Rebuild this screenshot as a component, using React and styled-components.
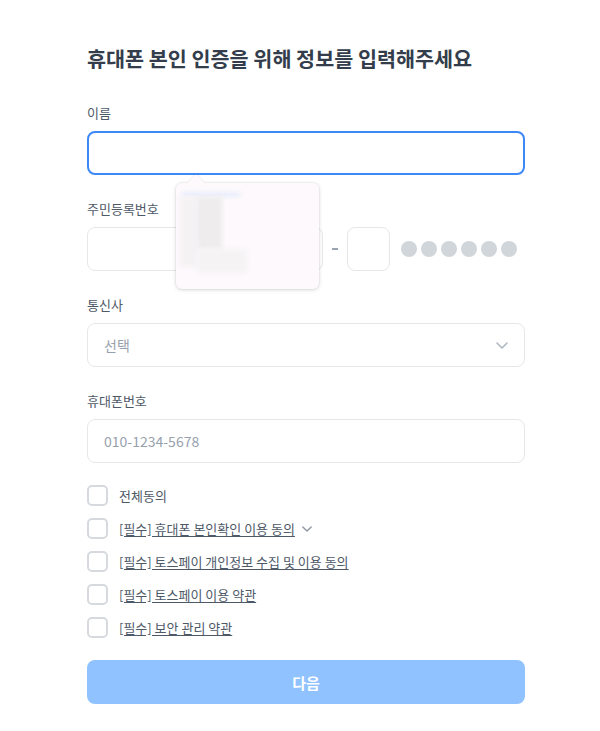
import React from "react";
import styled, { createGlobalStyle } from "styled-components";

const Global = createGlobalStyle`
  html, body { margin: 0; padding: 0; background: #ffffff; }
  body { font-family: "Noto Sans CJK KR", "Noto Sans", "Liberation Sans", sans-serif; }
  * { box-sizing: border-box; }
`;

const Page = styled.div`
  width: 600px;
  padding: 44px 75px 28px 87px;
  display: flex;
  flex-direction: column;
`;

const Title = styled.h1`
  margin: 0 0 32px;
  font-size: 20.7px;
  line-height: 28px;
  font-weight: 700;
  color: #333d4b;
`;

const Field = styled.div`
  position: relative;
  display: flex;
  flex-direction: column;
  margin-bottom: 25px;
`;

const Label = styled.label`
  font-size: 13px;
  line-height: 18px;
  color: #4e5968;
  margin-bottom: 9px;
`;

const Box = styled.div`
  height: 44px;
  flex: none;
  border-radius: 8px;
  border: ${(p) => (p.$focus ? "2px solid #3d88f7" : "1px solid #e5e8eb")};
  background: #fff;
  display: flex;
  align-items: center;
  padding: 0 16px;
  font-size: 14px;
  color: #97a1ad;
  width: ${(p) => p.$w || "100%"};
  justify-content: space-between;
`;

const Row = styled.div`
  display: flex;
  align-items: center;
`;

const Dash = styled.span`
  width: 24px;
  display: flex;
  justify-content: center;
  &::after {
    content: "";
    width: 6px;
    height: 1.5px;
    background: #9aa4b0;
  }
`;

const Dots = styled.div`
  display: flex;
  gap: 4px;
  margin-left: 11px;
`;

const Dot = styled.span`
  width: 16px;
  height: 16px;
  border-radius: 50%;
  background: #d1d6db;
`;

const Popup = styled.div`
  position: absolute;
  left: 89px;
  top: -17px;
  width: 143px;
  height: 106px;
  background: #fdf9fc;
  border-radius: 6px;
  box-shadow: 0 1px 4px rgba(0, 0, 0, 0.14), 0 0 0 1px rgba(0, 0, 0, 0.03);
  &::before {
    content: "";
    position: absolute;
    top: -6px;
    left: 14px;
    width: 12px;
    height: 12px;
    background: #fdf9fc;
    transform: rotate(45deg);
    box-shadow: -1px -1px 2px rgba(0, 0, 0, 0.06);
  }
`;

const Blur = styled.div`
  position: absolute;
  left: ${(p) => p.$x}px;
  top: ${(p) => p.$y}px;
  width: ${(p) => p.$w}px;
  height: ${(p) => p.$h}px;
  background: ${(p) => p.$c};
  filter: blur(2px);
`;

const Checks = styled.div`
  display: flex;
  flex-direction: column;
  gap: 12px;
  margin-top: -3px;
  margin-bottom: 22px;
`;

const CheckRow = styled.div`
  display: flex;
  align-items: center;
  gap: 11px;
  height: 21px;
`;

const CheckBox = styled.span`
  width: 21px;
  height: 21px;
  border: 2px solid #d6dadf;
  border-radius: 5px;
  background: #fff;
  flex: none;
`;

const CheckText = styled.span`
  font-size: 13px;
  line-height: 18px;
  color: #4e5968;
  text-decoration: ${(p) => (p.$link ? "underline" : "none")};
  text-underline-offset: 2px;
`;

const Button = styled.button`
  height: 44px;
  border: none;
  border-radius: 8px;
  background: #90c2ff;
  color: #fff;
  font-family: inherit;
  font-size: 15px;
  font-weight: 700;
`;

const Chevron = ({ size = 12, color = "#b0b8c1", style }) => (
  <svg width={size} height={size / 2 + 1} viewBox="0 0 12 7" style={style}>
    <path d="M1 1l5 5 5-5" fill="none" stroke={color} strokeWidth="1.6" strokeLinecap="round" strokeLinejoin="round" />
  </svg>
);

const agreements = [
  { text: "전체동의", link: false },
  { text: "[필수] 휴대폰 본인확인 이용 동의", link: true, more: true },
  { text: "[필수] 토스페이 개인정보 수집 및 이용 동의", link: true },
  { text: "[필수] 토스페이 이용 약관", link: true },
  { text: "[필수] 보안 관리 약관", link: true },
];

export default function App() {
  return (
    <>
      <Global />
      <Page>
        <Title>휴대폰 본인 인증을 위해 정보를 입력해주세요</Title>

        <Field>
          <Label>이름</Label>
          <Box $focus />
        </Field>

        <Field>
          <Label>주민등록번호</Label>
          <Row>
            <Box $w="236px" />
            <Dash />
            <Box $w="43px" />
            <Dots>
              {Array.from({ length: 6 }).map((_, i) => (
                <Dot key={i} />
              ))}
            </Dots>
          </Row>
          <Popup>
            <Blur $x={6} $y={10} $w={58} $h={3} $c="#dde8fb" />
            <Blur $x={4} $y={14} $w={18} $h={70} $c="#f5f2f4" />
            <Blur $x={21} $y={14} $w={25} $h={52} $c="#eeeced" />
            <Blur $x={21} $y={66} $w={50} $h={24} $c="#f6f3f5" />
          </Popup>
        </Field>

        <Field>
          <Label>통신사</Label>
          <Box>
            <span>선택</span>
            <Chevron />
          </Box>
        </Field>

        <Field>
          <Label>휴대폰번호</Label>
          <Box>010-1234-5678</Box>
        </Field>

        <Checks>
          {agreements.map((a) => (
            <CheckRow key={a.text}>
              <CheckBox />
              <CheckText $link={a.link}>{a.text}</CheckText>
              {a.more && <Chevron size={10} color="#8b95a1" style={{ marginLeft: -4 }} />}
            </CheckRow>
          ))}
        </Checks>

        <Button>다음</Button>
      </Page>
    </>
  );
}
